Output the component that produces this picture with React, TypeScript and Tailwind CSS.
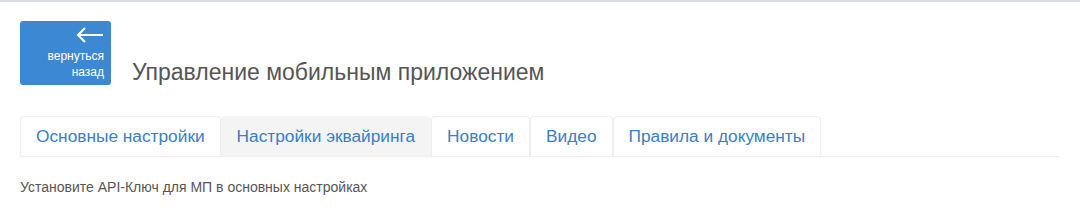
import React from "react";

const tabs = [
  { label: "Основные настройки", active: false },
  { label: "Настройки эквайринга", active: true },
  { label: "Новости", active: false },
  { label: "Видео", active: false },
  { label: "Правила и документы", active: false },
];

export default function App() {
  return (
    <div
      className="w-[1080px] h-[216px] bg-white border-t-2 border-[#d8dbe2] overflow-hidden"
      style={{ fontFamily: '"Liberation Sans", Arial, sans-serif' }}
    >
      <div className="pl-[20px] pr-[20px] pt-[19px]">
        <div className="flex items-end">
          <button className="w-[91px] h-[64px] rounded-[3px] bg-[#3d88d2] text-white flex flex-col items-end pr-[7px] pt-[6px]">
            <svg width="28" height="16" viewBox="0 0 28 16" fill="none" stroke="white" strokeWidth="2">
              <path d="M27 8H2" />
              <path d="M9 1L2 8l7 7" />
            </svg>
            <span className="text-[12px] leading-[16px] mt-[5px] text-right">
              вернуться
              <br />
              назад
            </span>
          </button>
          <h1 className="ml-[21px] text-[23px] leading-[28px] text-[#555] mb-[-1px]">
            Управление мобильным приложением
          </h1>
        </div>
        <div className="mt-[31px] flex border-b border-[#eeeeee]">
          {tabs.map((t) => (
            <div
              key={t.label}
              className={
                "h-[40px] px-[15px] flex items-center text-[17.3px] text-[#3a7ec4] border border-b-0 rounded-t-[4px] " +
                (t.active ? "bg-[#f4f4f4] border-[#f4f4f4]" : "bg-white border-[#eeeeee]")
              }
            >
              {t.label}
            </div>
          ))}
        </div>
        <div className="mt-[21px] text-[14px] leading-[18px] text-[#555]">
          Установите API-Ключ для МП в основных настройках
        </div>
      </div>
    </div>
  );
}
